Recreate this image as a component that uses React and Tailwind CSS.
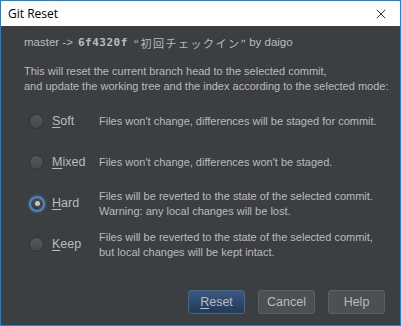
import { X } from 'lucide-react';

const modes = [
  { key: 'Soft', lines: ["Files won't change, differences will be staged for commit."] },
  { key: 'Mixed', lines: ["Files won't change, differences won't be staged."] },
  { key: 'Hard', lines: ['Files will be reverted to the state of the selected commit.', 'Warning: any local changes will be lost.'], checked: true },
  { key: 'Keep', lines: ['Files will be reverted to the state of the selected commit,', 'but local changes will be kept intact.'] },
];

function Radio({ checked }) {
  if (checked) {
    return (
      <div className="w-[16px] h-[16px] rounded-full border-2 border-[#4a88c7] shadow-[0_0_2px_1px_rgba(74,136,199,0.5)] bg-gradient-to-b from-[#4a4d50] to-[#3c3f41] flex items-center justify-center">
        <div className="w-[5px] h-[5px] rounded-full bg-[#c8c8c8]" />
      </div>
    );
  }
  return <div className="w-[15px] h-[15px] rounded-full border border-[#2f3133] bg-gradient-to-b from-[#55585a] to-[#45484a]" />;
}

export default function App() {
  return (
    <div className="w-[401px] h-[326px] border border-[#1883d7] bg-[#3c3f41] flex flex-col font-['Liberation_Sans','Noto_Sans_CJK_JP',sans-serif] text-[11px] text-[#bbbbbb]">
      <div className="h-[25px] bg-white flex items-center justify-between pl-[7px] pr-[11px] shrink-0">
        <span className="text-[12px] text-black font-['Open_Sans',sans-serif]">Git Reset</span>
        <X className="w-[16px] h-[16px] text-black" strokeWidth={1.2} />
      </div>

      <div className="pl-[23px] pr-[4px] pt-[9px]">
        <div className="h-[16px] flex items-center whitespace-nowrap">
          <span className="text-[11.5px]">master -&gt;</span>
          <span className="ml-[5px] font-bold font-['DejaVu_Sans_Mono',monospace] text-[11px] tracking-[0.5px]">6f4320f</span>
          <span className="ml-[6px] font-['Noto_Sans_CJK_JP',sans-serif] text-[11px] tracking-[1.5px]">“初回チェックイン”</span>
          <span className="ml-[2px] text-[11.5px]">by daigo</span>
        </div>

        <div className="mt-[13px] leading-[15px] whitespace-nowrap">
          <div>This will reset the current branch head to the selected commit,</div>
          <div>and update the working tree and the index according to the selected mode:</div>
        </div>

        <div className="mt-[7px] flex flex-col">
          {modes.map((m) => (
            <div key={m.key} className="grid grid-cols-[28px_47px_1fr] items-center h-[41px]">
              <div className="pl-[5px] flex items-center">
                <Radio checked={m.checked} />
              </div>
              <div className="text-[12.5px]">
                <span className="underline underline-offset-2">{m.key[0]}</span>
                {m.key.slice(1)}
              </div>
              <div className="leading-[15px] whitespace-nowrap">
                {m.lines.map((l) => (
                  <div key={l}>{l}</div>
                ))}
              </div>
            </div>
          ))}
        </div>
      </div>

      <div className="mt-auto mb-[11px] flex justify-end gap-[13px] pr-[15px]">
        <button className="w-[57px] h-[24px] rounded-[3px] border border-[#4a6682] bg-gradient-to-b from-[#3a5a80] to-[#22395a] text-[12.5px] text-[#bbbbbb]">
          <span className="underline underline-offset-2">R</span>eset
        </button>
        <button className="w-[57px] h-[24px] rounded-[3px] border border-[#5e6163] bg-[#4c5052] text-[12.5px] text-[#bbbbbb]">Cancel</button>
        <button className="w-[57px] h-[24px] rounded-[3px] border border-[#5e6163] bg-[#4c5052] text-[12.5px] text-[#bbbbbb]">Help</button>
      </div>
    </div>
  );
}
